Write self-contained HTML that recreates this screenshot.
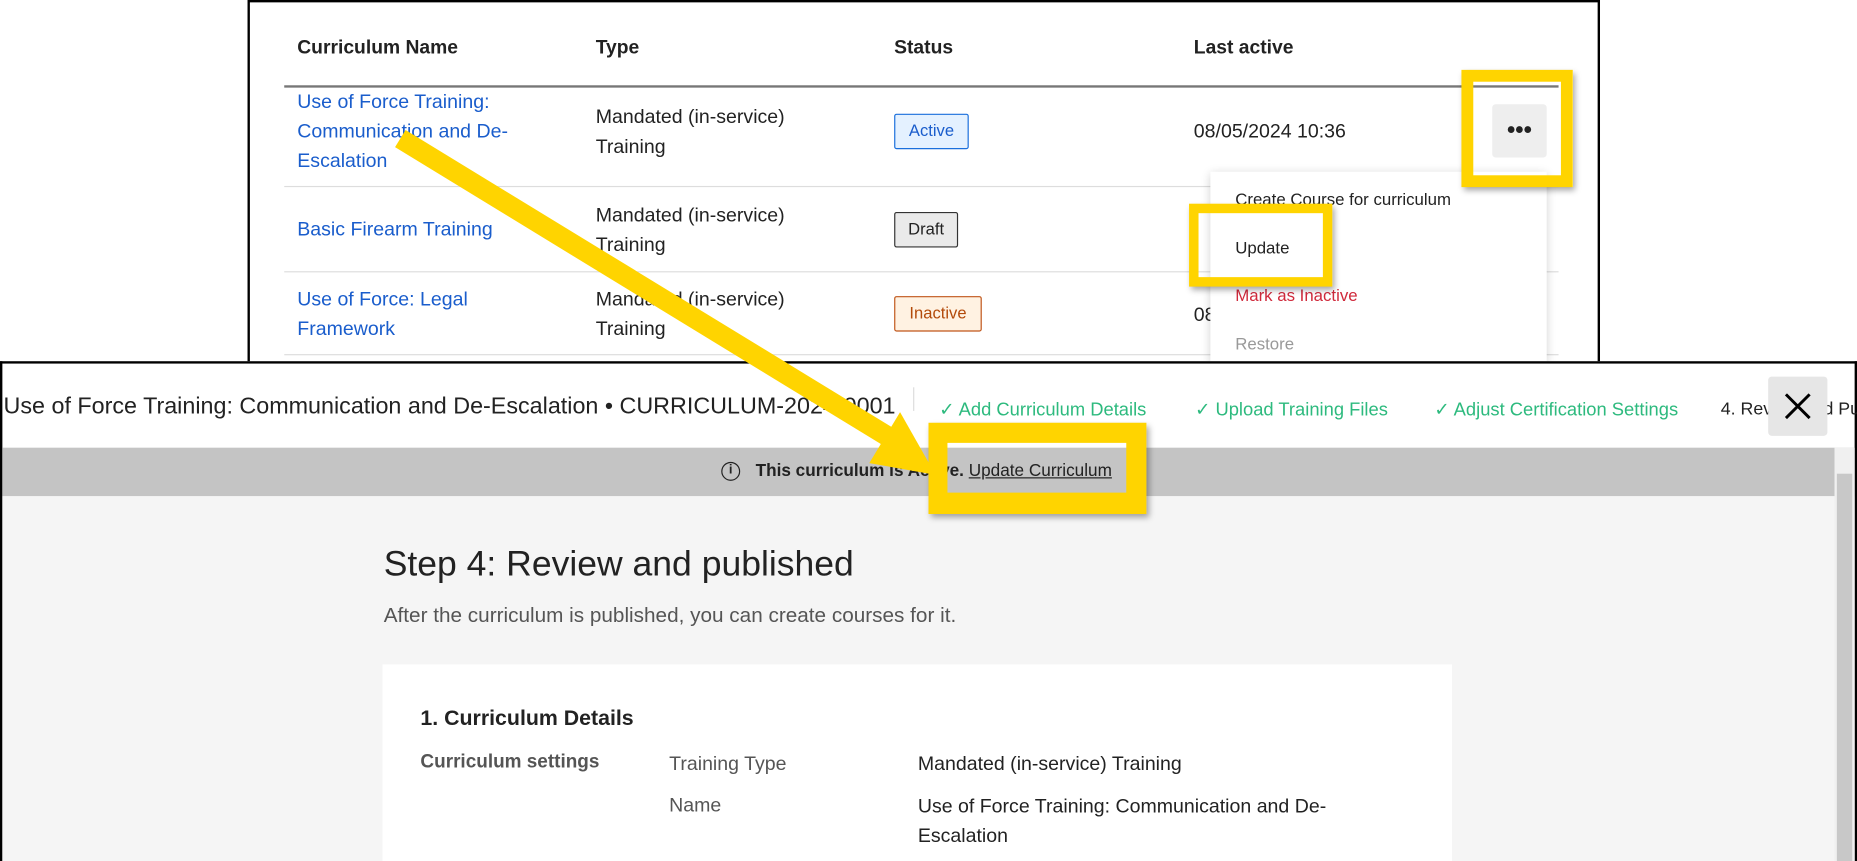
<!DOCTYPE html>
<html><head><meta charset="utf-8"><style>
*{margin:0;padding:0;box-sizing:border-box}
html,body{width:1857px;height:861px;overflow:hidden;background:#fff;font-family:"Liberation Sans",sans-serif;color:#222}
#w{position:absolute;left:0;top:0;width:1568px;height:727px;transform:scale(1.18431);transform-origin:0 0}
.a{position:absolute;white-space:nowrap}
.lk{color:#1a5dcc;font-size:16.5px;line-height:25px}
.tx{font-size:16.5px;line-height:25px;color:#222}
.badge{position:absolute;font-size:14px;border-radius:2px;border:1px solid;text-align:center;line-height:27px}
.yb{position:absolute;border:solid #ffd400;box-shadow:2px 3px 5px rgba(0,0,0,.35)}
.g{color:#2dba7e;font-size:15.5px}
</style></head><body><div id="w">
<!-- top panel -->
<div class="a" style="left:209px;top:0;width:1142px;height:308px;border:2px solid #000;background:#fff"></div>
<div class="a" style="left:251px;top:31px;font-weight:bold;font-size:16.3px">Curriculum Name</div>
<div class="a" style="left:503px;top:31px;font-weight:bold;font-size:16.3px">Type</div>
<div class="a" style="left:755px;top:31px;font-weight:bold;font-size:16.3px">Status</div>
<div class="a" style="left:1008px;top:31px;font-weight:bold;font-size:16.3px">Last active</div>
<div class="a" style="left:240px;top:72px;width:1076px;height:2px;background:#777"></div>
<div class="a" style="left:240px;top:157px;width:1076px;height:1px;background:#ddd"></div>
<div class="a" style="left:240px;top:229px;width:1076px;height:1px;background:#ddd"></div>
<div class="a" style="left:240px;top:299px;width:1076px;height:1px;background:#ddd"></div>
<div class="a lk" style="left:251px;top:74px">Use of Force Training:<br>Communication and De-<br>Escalation</div>
<div class="a tx" style="left:503px;top:87px">Mandated (in-service)<br>Training</div>
<div class="badge" style="left:755px;top:96px;width:63px;height:30px;color:#1a5dcc;border-color:#1a6fdc;background:#e4f1ff">Active</div>
<div class="a tx" style="left:1008px;top:99px">08/05/2024 10:36</div>
<div class="a" style="left:1260px;top:88px;width:46px;height:45px;background:#eee;border-radius:3px;text-align:center;font-weight:bold;font-size:20px;line-height:45px">•••</div>
<div class="a lk" style="left:251px;top:182px">Basic Firearm Training</div>
<div class="a tx" style="left:503px;top:170px">Mandated (in-service)<br>Training</div>
<div class="badge" style="left:755px;top:179px;width:54px;height:30px;color:#222;border-color:#333;background:#eaeaea">Draft</div>
<div class="a lk" style="left:251px;top:241px">Use of Force: Legal<br>Framework</div>
<div class="a tx" style="left:503px;top:241px">Mandated (in-service)<br>Training</div>
<div class="badge" style="left:755px;top:250px;width:74px;height:30px;color:#b34a0a;border-color:#c0561a;background:#fff2e2">Inactive</div>
<div class="a tx" style="left:1008px;top:254px">08</div>
<div class="a" style="left:1022px;top:145px;width:284px;height:161px;background:#fff;box-shadow:0 2px 8px rgba(0,0,0,.2)"></div>
<div class="a" style="left:1043px;top:161px;font-size:14.2px">Create Course for curriculum</div>
<div class="a" style="left:1043px;top:202px;font-size:14.2px">Update</div>
<div class="a" style="left:1043px;top:242px;font-size:14.2px;color:#d0293b">Mark as Inactive</div>
<div class="a" style="left:1043px;top:283px;font-size:14.2px;color:#999">Restore</div>
<div class="yb" style="left:1234px;top:59px;width:94px;height:99px;border-width:10px"></div>
<div class="yb" style="left:1004px;top:172px;width:121px;height:70px;border-width:8px"></div>
<!-- bottom panel -->
<div class="a" style="left:0;top:305px;width:1568px;height:422px;border:2px solid #000;border-bottom:none;background:#fff"></div>
<div class="a" style="left:3px;top:332px;font-size:19.7px">Use of Force Training: Communication and De-Escalation • CURRICULUM-2024-0001</div>
<div class="a" style="left:771px;top:327px;width:1px;height:20px;background:#ddd"></div>
<div class="a g" style="left:793px;top:337px">✓ Add Curriculum Details</div>
<div class="a g" style="left:1009px;top:337px">✓ Upload Training Files</div>
<div class="a g" style="left:1211px;top:337px">✓ Adjust Certification Settings</div>
<div class="a" style="left:1453px;top:337px;font-size:15px">4. Review and Pu</div>
<div class="a" style="left:1493px;top:318px;width:50px;height:50px;background:#e6e6e6;border-radius:3px"></div>
<svg class="a" style="left:1493px;top:318px" width="50" height="50"><path d="M15 15L35 35M35 15L15 35" stroke="#000" stroke-width="2.5"/></svg>
<div class="a" style="left:2px;top:378px;width:1564px;height:41px;background:#c4c4c4"></div>
<div class="a" style="left:2px;top:419px;width:1564px;height:308px;background:#f5f5f5"></div>
<div class="a" style="left:1549px;top:378px;width:17px;height:349px;background:#f0f0f0"></div>
<div class="a" style="left:1551px;top:400px;width:13px;height:327px;background:#c8c8c8"></div>
<div class="a" style="left:609px;top:390px;width:16px;height:16px;border:1.5px solid #222;border-radius:50%;font-size:11px;text-align:center;line-height:13px;font-weight:bold">i</div>
<div class="a" style="left:638px;top:390px;font-size:14.5px"><b>This curriculum is Active.</b> <span style="text-decoration:underline">Update Curriculum</span></div>
<div class="a" style="left:324px;top:460px;font-size:30px;color:#222">Step 4: Review and published</div>
<div class="a" style="left:324px;top:509px;font-size:17.5px;color:#555">After the curriculum is published, you can create courses for it.</div>
<div class="a" style="left:323px;top:561px;width:903px;height:166px;background:#fff"></div>
<div class="a" style="left:355px;top:596px;font-size:18px;font-weight:bold;color:#222">1. Curriculum Details</div>
<div class="a" style="left:355px;top:635px;font-size:16px;font-weight:bold;color:#555">Curriculum settings</div>
<div class="a" style="left:565px;top:636px;font-size:16.5px;color:#555">Training Type</div>
<div class="a" style="left:775px;top:636px;font-size:16.5px">Mandated (in-service) Training</div>
<div class="a" style="left:565px;top:671px;font-size:16.5px;color:#555">Name</div>
<div class="a" style="left:775px;top:669px;font-size:16.5px;line-height:25px">Use of Force Training: Communication and De-<br>Escalation</div>
<div class="yb" style="left:784px;top:357px;width:184px;height:77px;border-width:17px 17px 18px 16px"></div>
<svg class="a" style="left:0;top:0" width="1568" height="727"><line x1="338" y1="117" x2="752" y2="370" stroke="#ffd400" stroke-width="17"/><polygon points="790,401 734,391 760,348" fill="#ffd400"/></svg>
</div></body></html>
